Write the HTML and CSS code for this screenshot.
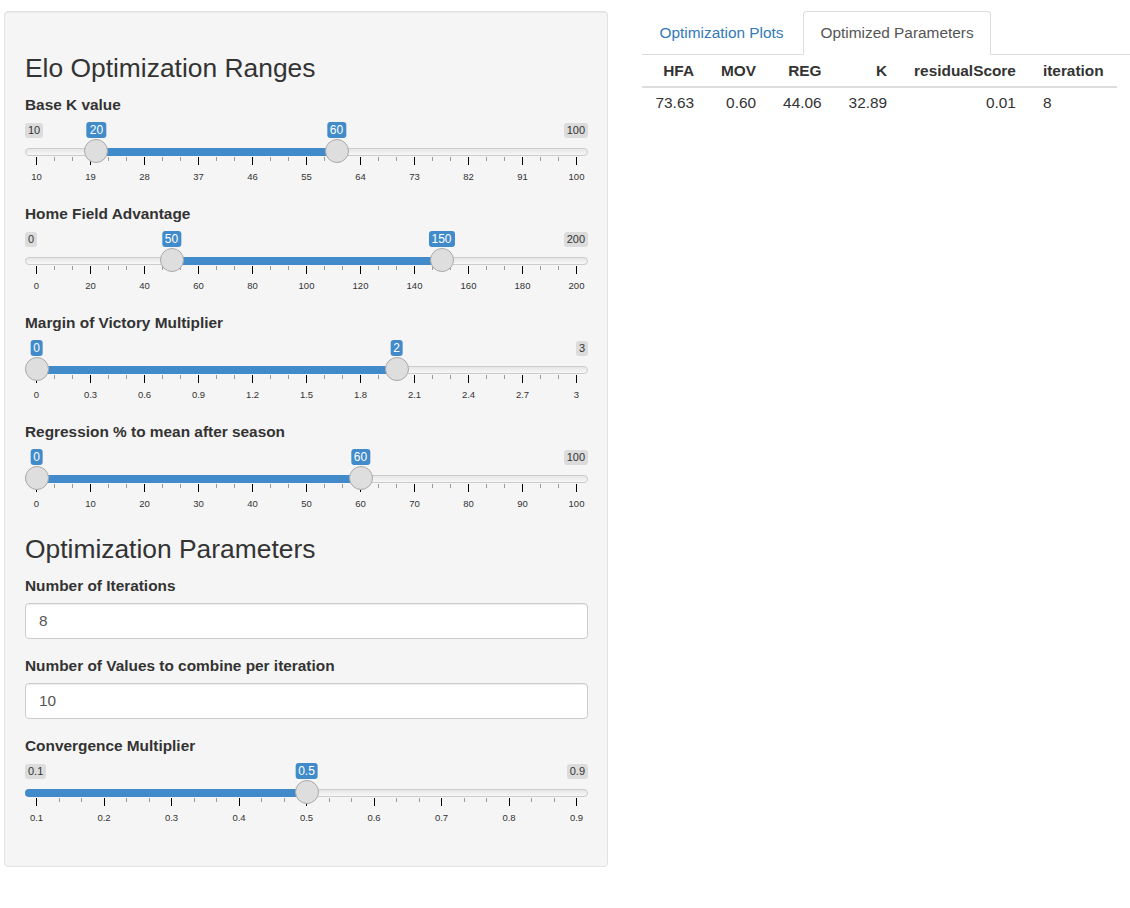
FILE: index.html
```html
<!DOCTYPE html>
<html>
<head>
<meta charset="utf-8">
<title>Elo Optimization</title>
<link rel="stylesheet" href="styles.css">
</head>
<body>
<div class="page">
  <div class="well">
    <h3 class="section-title">Elo Optimization Ranges</h3>

    <div class="group slider-group">
      <label class="ctl-label">Base K value</label>
      <div class="irs">
        <div class="irs-line"></div>
        <div class="irs-bar" style="--a:0.1111;--b:0.5556"></div>
        <span class="irs-min">10</span>
        <span class="irs-max">100</span>
        <span class="irs-val" style="--p:0.1111">20</span>
        <span class="irs-val" style="--p:0.5556">60</span>
        <span class="irs-handle" style="--p:0.1111"></span>
        <span class="irs-handle" style="--p:0.5556"></span>
        <div class="irs-ticks"><i class="t"></i><i></i><i></i><i class="t"></i><i></i><i></i><i class="t"></i><i></i><i></i><i class="t"></i><i></i><i></i><i class="t"></i><i></i><i></i><i class="t"></i><i></i><i></i><i class="t"></i><i></i><i></i><i class="t"></i><i></i><i></i><i class="t"></i><i></i><i></i><i class="t"></i><i></i><i></i><i class="t"></i></div>
        <div class="irs-labels"><span>10</span><span>19</span><span>28</span><span>37</span><span>46</span><span>55</span><span>64</span><span>73</span><span>82</span><span>91</span><span>100</span></div>
      </div>
    </div>

    <div class="group slider-group">
      <label class="ctl-label">Home Field Advantage</label>
      <div class="irs">
        <div class="irs-line"></div>
        <div class="irs-bar" style="--a:0.25;--b:0.75"></div>
        <span class="irs-min">0</span>
        <span class="irs-max">200</span>
        <span class="irs-val" style="--p:0.25">50</span>
        <span class="irs-val" style="--p:0.75">150</span>
        <span class="irs-handle" style="--p:0.25"></span>
        <span class="irs-handle" style="--p:0.75"></span>
        <div class="irs-ticks"><i class="t"></i><i></i><i></i><i class="t"></i><i></i><i></i><i class="t"></i><i></i><i></i><i class="t"></i><i></i><i></i><i class="t"></i><i></i><i></i><i class="t"></i><i></i><i></i><i class="t"></i><i></i><i></i><i class="t"></i><i></i><i></i><i class="t"></i><i></i><i></i><i class="t"></i><i></i><i></i><i class="t"></i></div>
        <div class="irs-labels"><span>0</span><span>20</span><span>40</span><span>60</span><span>80</span><span>100</span><span>120</span><span>140</span><span>160</span><span>180</span><span>200</span></div>
      </div>
    </div>

    <div class="group slider-group">
      <label class="ctl-label">Margin of Victory Multiplier</label>
      <div class="irs">
        <div class="irs-line"></div>
        <div class="irs-bar" style="--a:0;--b:0.6667"></div>
        <span class="irs-max">3</span>
        <span class="irs-val" style="--p:0">0</span>
        <span class="irs-val" style="--p:0.6667">2</span>
        <span class="irs-handle" style="--p:0"></span>
        <span class="irs-handle" style="--p:0.6667"></span>
        <div class="irs-ticks"><i class="t"></i><i></i><i></i><i class="t"></i><i></i><i></i><i class="t"></i><i></i><i></i><i class="t"></i><i></i><i></i><i class="t"></i><i></i><i></i><i class="t"></i><i></i><i></i><i class="t"></i><i></i><i></i><i class="t"></i><i></i><i></i><i class="t"></i><i></i><i></i><i class="t"></i><i></i><i></i><i class="t"></i></div>
        <div class="irs-labels"><span>0</span><span>0.3</span><span>0.6</span><span>0.9</span><span>1.2</span><span>1.5</span><span>1.8</span><span>2.1</span><span>2.4</span><span>2.7</span><span>3</span></div>
      </div>
    </div>

    <div class="group slider-group">
      <label class="ctl-label">Regression % to mean after season</label>
      <div class="irs">
        <div class="irs-line"></div>
        <div class="irs-bar" style="--a:0;--b:0.6"></div>
        <span class="irs-max">100</span>
        <span class="irs-val" style="--p:0">0</span>
        <span class="irs-val" style="--p:0.6">60</span>
        <span class="irs-handle" style="--p:0"></span>
        <span class="irs-handle" style="--p:0.6"></span>
        <div class="irs-ticks"><i class="t"></i><i></i><i></i><i class="t"></i><i></i><i></i><i class="t"></i><i></i><i></i><i class="t"></i><i></i><i></i><i class="t"></i><i></i><i></i><i class="t"></i><i></i><i></i><i class="t"></i><i></i><i></i><i class="t"></i><i></i><i></i><i class="t"></i><i></i><i></i><i class="t"></i><i></i><i></i><i class="t"></i></div>
        <div class="irs-labels"><span>0</span><span>10</span><span>20</span><span>30</span><span>40</span><span>50</span><span>60</span><span>70</span><span>80</span><span>90</span><span>100</span></div>
      </div>
    </div>

    <h3 class="section-title">Optimization Parameters</h3>

    <div class="group input-group">
      <label class="ctl-label">Number of Iterations</label>
      <input class="form-control" type="text" value="8">
    </div>

    <div class="group input-group">
      <label class="ctl-label">Number of Values to combine per iteration</label>
      <input class="form-control" type="text" value="10">
    </div>

    <div class="group slider-group">
      <label class="ctl-label">Convergence Multiplier</label>
      <div class="irs">
        <div class="irs-line"></div>
        <div class="irs-bar single" style="--b:0.5"></div>
        <span class="irs-min">0.1</span>
        <span class="irs-max">0.9</span>
        <span class="irs-val" style="--p:0.5">0.5</span>
        <span class="irs-handle" style="--p:0.5"></span>
        <div class="irs-ticks"><i class="t"></i><i></i><i></i><i class="t"></i><i></i><i></i><i class="t"></i><i></i><i></i><i class="t"></i><i></i><i></i><i class="t"></i><i></i><i></i><i class="t"></i><i></i><i></i><i class="t"></i><i></i><i></i><i class="t"></i><i></i><i></i><i class="t"></i></div>
        <div class="irs-labels"><span>0.1</span><span>0.2</span><span>0.3</span><span>0.4</span><span>0.5</span><span>0.6</span><span>0.7</span><span>0.8</span><span>0.9</span></div>
      </div>
    </div>
  </div>

  <div class="main">
    <ul class="nav-tabs">
      <li><a href="#">Optimization Plots</a></li>
      <li class="active"><a href="#">Optimized Parameters</a></li>
    </ul>
    <table class="result-table">
      <thead>
        <tr><th>HFA</th><th>MOV</th><th>REG</th><th>K</th><th>residualScore</th><th class="left">iteration</th></tr>
      </thead>
      <tbody>
        <tr><td>73.63</td><td>0.60</td><td>44.06</td><td>32.89</td><td>0.01</td><td class="left">8</td></tr>
      </tbody>
    </table>
  </div>
</div>
</body>
</html>
```

FILE: styles.css
```css
html, body {
  margin: 0;
  padding: 0;
  background: #fff;
}

body {
  font-family: "Liberation Sans", Arial, sans-serif;
  font-size: 15.4px;
  line-height: 22px;
  color: #333;
}

.page {
  display: flex;
  align-items: flex-start;
  padding: 11px 0 0 4px;
}

.well {
  width: 604px;
  flex: none;
  box-sizing: border-box;
  background: #f5f5f5;
  border: 1px solid #e3e3e3;
  border-radius: 4px;
  padding: 20px 19px 22px 20px;
  box-shadow: inset 0 1px 1px rgba(0, 0, 0, 0.05);
}

.section-title {
  font-size: 26.4px;
  font-weight: 500;
  line-height: 29px;
  margin: 22px 0 11px;
  color: #333;
}

.group {
  margin-bottom: 17px;
}

.group.input-group {
  margin-bottom: 16px;
}

.ctl-label {
  display: block;
  font-weight: bold;
  line-height: 22px;
  margin-bottom: 6px;
}

/* range slider */
.irs {
  position: relative;
  height: 64px;
  box-sizing: border-box;
  padding-top: 26px;
}

.irs-line {
  height: 8px;
  box-sizing: border-box;
  border: 1px solid #cccccc;
  border-radius: 16px;
  background: linear-gradient(to bottom, #dedede -50%, #ffffff 150%);
}

.irs-bar {
  position: absolute;
  top: 26px;
  height: 8px;
  background: #428bca;
  left: calc(11.5px + var(--a) * 540px);
  width: calc((var(--b) - var(--a)) * 540px);
}

.irs-bar.single {
  left: 0;
  width: calc(11.5px + var(--b) * 540px);
  border-radius: 16px 0 0 16px;
}

.irs-handle {
  position: absolute;
  top: 17px;
  left: calc(var(--p) * 540px - 0.5px);
  width: 24px;
  height: 24px;
  box-sizing: border-box;
  border: 1px solid #aaaaaa;
  border-radius: 50%;
  background: #dedede;
  z-index: 2;
}

.irs-min,
.irs-max {
  position: absolute;
  top: 1px;
  font-size: 11px;
  line-height: 13px;
  padding: 1px 3px;
  color: #333;
  background: rgba(0, 0, 0, 0.1);
  border-radius: 3px;
}

.irs-min { left: 0; }
.irs-max { right: 0; }

.irs-val {
  position: absolute;
  top: 0;
  left: calc(11.5px + var(--p) * 540px);
  transform: translateX(-50%);
  font-size: 12px;
  line-height: 14px;
  padding: 1px 3px;
  color: #fff;
  background: #428bca;
  border-radius: 3px;
  white-space: nowrap;
  z-index: 3;
}

.irs-ticks {
  display: flex;
  justify-content: space-between;
  align-items: flex-start;
  height: 8px;
  margin: 1px 11px 0;
}

.irs-ticks i {
  display: block;
  width: 1px;
  height: 4px;
  background: #9a9a9a;
}

.irs-ticks i.t {
  height: 8px;
  background: #000;
}

.irs-labels {
  display: flex;
  justify-content: space-between;
  margin: 6px 11px 0;
  font-size: 9.5px;
  line-height: 12px;
  color: #333;
}

.irs-labels span {
  width: 1px;
  display: flex;
  justify-content: center;
  white-space: nowrap;
}

/* text inputs */
.form-control {
  display: block;
  width: 100%;
  height: 36px;
  box-sizing: border-box;
  padding: 6px 13px;
  font-family: inherit;
  font-size: 15.4px;
  line-height: 22px;
  color: #555;
  background: #fff;
  border: 1px solid #ccc;
  border-radius: 4px;
  box-shadow: inset 0 1px 1px rgba(0, 0, 0, 0.075);
  margin: 0;
}

/* main panel */
.main {
  flex: 1;
  margin-left: 34px;
  min-width: 0;
}

.nav-tabs {
  display: flex;
  list-style: none;
  margin: 0;
  padding: 0;
  border-bottom: 1px solid #ddd;
}

.nav-tabs li {
  margin-bottom: -1px;
}

.nav-tabs a {
  display: block;
  padding: 10px 16.5px;
  line-height: 22px;
  margin-right: 2px;
  border: 1px solid transparent;
  border-radius: 4px 4px 0 0;
  color: #337ab7;
  text-decoration: none;
}

.nav-tabs li.active a {
  color: #555;
  background: #fff;
  border-color: #ddd #ddd transparent;
}

.result-table {
  border-collapse: collapse;
  border-spacing: 0;
}

.result-table th {
  padding: 5px 13.5px 4px;
  line-height: 22px;
  font-weight: bold;
  text-align: right;
  border-bottom: 2px solid #ddd;
}

.result-table td {
  padding: 4px 13.5px;
  line-height: 22px;
  text-align: right;
}

.result-table .left {
  text-align: left;
}
```
